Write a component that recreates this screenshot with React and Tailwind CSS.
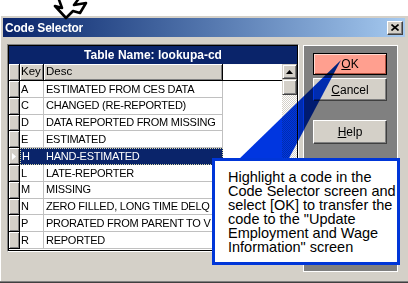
import React from "react";

const rows = [
  ["A", "ESTIMATED FROM CES DATA"],
  ["C", "CHANGED (RE-REPORTED)"],
  ["D", "DATA REPORTED FROM MISSING"],
  ["E", "ESTIMATED"],
  ["H", "HAND-ESTIMATED"],
  ["L", "LATE-REPORTER"],
  ["M", "MISSING"],
  ["N", "ZERO FILLED, LONG TIME DELQ"],
  ["P", "PRORATED FROM PARENT TO V"],
  ["R", "REPORTED"],
];

function RowHeader({ selected }) {
  return (
    <div className="w-[11px] h-full shrink-0 border-r border-r-black border-b border-b-black bg-[#d4d0c8] shadow-[inset_1px_1px_0_#ffffff,inset_-1px_-1px_0_#808080] flex items-center justify-center">
      {selected && (
        <svg width="5" height="7" viewBox="0 0 5 7">
          <polygon points="0,0 4,3.5 0,7" fill="#ffffff" />
        </svg>
      )}
    </div>
  );
}

function GridRow({ k, d, selected }) {
  return (
    <div className="h-[16.8px] flex shrink-0">
      <RowHeader selected={selected} />
      {selected ? (
        <div className="w-[203px] h-full flex bg-[#0a246a] text-white outline outline-1 outline-dotted outline-[#d8d8a8] -outline-offset-1">
          <div className="w-[24px] pl-[2px] flex items-center">{k}</div>
          <div className="w-[179px] pl-[2px] flex items-center whitespace-nowrap overflow-hidden">{d}</div>
        </div>
      ) : (
        <>
          <div className="w-[24px] h-full pl-[1px] flex items-center border-r border-b border-[#c0c0c0]">{k}</div>
          <div className="w-[179px] h-full pl-[2px] flex items-center border-r border-b border-[#c0c0c0] whitespace-nowrap overflow-hidden">{d}</div>
        </>
      )}
      <div className="flex-1" />
    </div>
  );
}

function RaisedButton({ children, className = "" }) {
  return (
    <div
      className={
        "w-[74px] flex items-center justify-center bg-[#d4d0c8] border border-t-white border-l-white border-r-[#404040] border-b-[#404040] shadow-[inset_-1px_-1px_0_#808080] text-[12px] text-black " +
        className
      }
    >
      {children}
    </div>
  );
}

export default function App() {
  return (
    <div className="relative w-[408px] h-[283px] overflow-hidden bg-white font-['Liberation_Sans',Arial,sans-serif] text-black">
      <div className="h-[16px]" />
      <div className="h-[267px] flex flex-col bg-[#d4d0c8] shadow-[inset_0_-1px_0_#404040,inset_0_-2px_0_#808080,inset_1px_0_0_#ffffff]">
        <div className="pt-[2px] px-[3px]">
          <div className="h-[19px] flex items-center justify-between pl-[2px] pr-[2px] bg-linear-to-r from-[#0a246a] to-[#a6caf0]">
            <span className="text-[12px] font-bold text-white leading-none tracking-[-0.2px]">Code Selector</span>
            <div className="w-[16px] h-[14px] bg-[#d4d0c8] border border-t-white border-l-white border-r-[#404040] border-b-[#404040] shadow-[inset_-1px_-1px_0_#808080] flex items-center justify-center">
              <svg width="8" height="7" viewBox="0 0 8 7">
                <path d="M0.5 0.5 L7.5 6.5 M7.5 0.5 L0.5 6.5" stroke="#000" strokeWidth="1.6" />
              </svg>
            </div>
          </div>
        </div>

        <div className="flex pt-[7px] pl-[7px]">
          {/* table */}
          <div className="w-[292px] h-[208px] border border-t-[#808080] border-l-[#808080] border-r-white border-b-white">
            <div className="w-full h-full border border-black flex flex-col overflow-hidden bg-white">
              <div className="h-[18px] shrink-0 bg-[#0a246a] text-white text-[12px] font-bold flex items-center justify-center">
                Table Name: lookupa-cd
              </div>
              <div className="flex flex-1 min-h-0">
                <div className="w-[273px] flex flex-col text-[11px] tracking-[-0.25px] overflow-hidden">
                  <div className="h-[17px] shrink-0 flex border-b border-b-black">
                    <div className="w-[11px] h-full border-r border-r-black bg-[#d4d0c8] shadow-[inset_1px_1px_0_#ffffff,inset_-1px_-1px_0_#808080]" />
                    <div className="w-[24px] h-full pl-[1px] flex items-center border-r border-r-black bg-[#d4d0c8] shadow-[inset_1px_1px_0_#ffffff,inset_-1px_-1px_0_#808080] text-[11.5px] tracking-normal">
                      Key
                    </div>
                    <div className="w-[179px] h-full pl-[2px] flex items-center border-r border-r-black bg-[#d4d0c8] shadow-[inset_1px_1px_0_#ffffff,inset_-1px_-1px_0_#808080] text-[11.5px] tracking-normal">
                      Desc
                    </div>
                    <div className="flex-1" />
                  </div>
                  {rows.map(([k, d]) => (
                    <GridRow key={k} k={k} d={d} selected={k === "H"} />
                  ))}
                </div>
                <div className="w-[15px] flex flex-col">
                  <div className="h-[15px] shrink-0 bg-[#d4d0c8] border border-t-[#d4d0c8] border-l-[#d4d0c8] border-r-[#404040] border-b-[#404040] shadow-[inset_1px_1px_0_#ffffff,inset_-1px_-1px_0_#808080] flex items-center justify-center">
                    <svg width="7" height="4" viewBox="0 0 7 4">
                      <polygon points="3.5,0 7,4 0,4" fill="#000" />
                    </svg>
                  </div>
                  <div className="h-[16px] shrink-0 bg-[#d4d0c8] border border-t-[#d4d0c8] border-l-[#d4d0c8] border-r-[#404040] border-b-[#404040] shadow-[inset_1px_1px_0_#ffffff,inset_-1px_-1px_0_#808080]" />
                  <div className="flex-1 bg-[image:repeating-conic-gradient(#d4d0c8_0%_25%,#ffffff_0%_50%)] bg-[length:2px_2px]" />
                </div>
              </div>
            </div>
          </div>

          {/* right panel */}
          <div className="ml-[4px] mt-[1px] w-[95px] h-[227px] border border-white bg-[#808080] flex flex-col pl-[9px] pt-[7px]">
            <div className="w-[74px] h-[22px] border border-black bg-[#ff9f8f] shadow-[inset_1px_1px_0_#ffd8d0,inset_-1px_-1px_0_#b05040] flex items-center justify-center text-[12px]">
              <span><span className="underline">O</span>K</span>
            </div>
            <RaisedButton className="h-[23px] mt-[3px]">
              <span><span className="underline">C</span>ancel</span>
            </RaisedButton>
            <RaisedButton className="h-[24px] mt-[19px]">
              <span><span className="underline">H</span>elp</span>
            </RaisedButton>
          </div>
        </div>
      </div>

      {/* hand drawn arrow */}
      <svg className="absolute left-0 top-0" width="100" height="22" viewBox="0 0 100 22">
        <polygon
          points="66,18 55,6 62,8 58,-3 80,-3 74,5 86,3 80,13 73,11"
          fill="#ffffff"
          stroke="#000"
          strokeWidth="2.6"
          strokeLinejoin="round"
        />
      </svg>

      {/* callout wedge */}
      <svg className="absolute left-0 top-0 mix-blend-multiply pointer-events-none" width="408" height="283" viewBox="0 0 408 283">
        <polygon points="341,60 236,162 287,162" fill="#0036e0" />
      </svg>

      {/* callout box */}
      <div className="absolute left-[212px] top-[158px] w-[188px] h-[107px] border-[3px] border-[#0036d8] bg-white pl-[13px] pt-[9px] text-[14.5px] leading-[14px] text-black whitespace-nowrap">
        Highlight a code in the
        <br />
        Code Selector screen and
        <br />
        select [OK] to transfer the
        <br />
        code to the "Update
        <br />
        Employment and Wage
        <br />
        Information" screen
      </div>
    </div>
  );
}
